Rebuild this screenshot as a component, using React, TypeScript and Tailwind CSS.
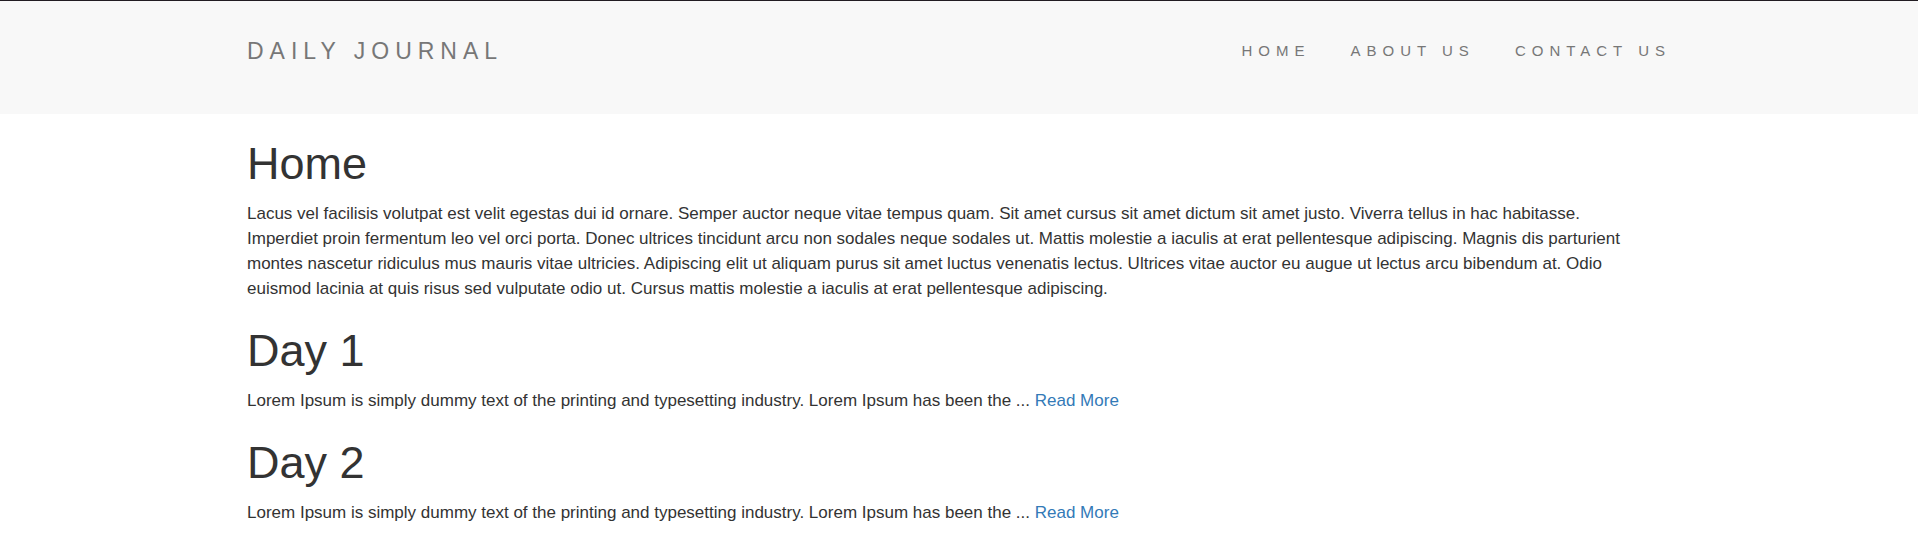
import React from 'react';

const navItems = ['Home', 'About Us', 'Contact Us'];

const posts = [
  { id: 1, title: 'Day 1' },
  { id: 2, title: 'Day 2' },
];

const preview =
  'Lorem Ipsum is simply dummy text of the printing and typesetting industry. Lorem Ipsum has been the ...';

const heading = 'mb-3 text-[45px] leading-[50px] font-normal';

export default function App() {
  return (
    <div className="bg-white font-['Liberation_Sans',Arial,sans-serif] text-[#333333]">
      <header className="border-t border-[#211c22] bg-[#f8f8f8] pt-[37px] pb-[50px]">
        <nav className="mx-auto flex w-full max-w-[1462px] items-center justify-between px-[19px]">
          <a href="#home" className="text-[23px] leading-[26px] tracking-[6px] text-[#777777] uppercase">
            Daily Journal
          </a>
          <ul className="flex gap-10">
            {navItems.map((item) => (
              <li key={item}>
                <a href="#home" className="text-[15px] tracking-[6px] text-[#777777] uppercase">
                  {item}
                </a>
              </li>
            ))}
          </ul>
        </nav>
      </header>
      <main className="mx-auto w-full max-w-[1462px] px-[19px] text-[17px] leading-[25px]">
        <section className="pt-[25px]">
          <h1 className={heading}>Home</h1>
          <p className="max-w-[1400px]">
            Lacus vel facilisis volutpat est velit egestas dui id ornare. Semper auctor neque vitae tempus quam. Sit
            amet cursus sit amet dictum sit amet justo. Viverra tellus in hac habitasse. Imperdiet proin fermentum leo
            vel orci porta. Donec ultrices tincidunt arcu non sodales neque sodales ut. Mattis molestie a iaculis at
            erat pellentesque adipiscing. Magnis dis parturient montes nascetur ridiculus mus mauris vitae ultricies.
            Adipiscing elit ut aliquam purus sit amet luctus venenatis lectus. Ultrices vitae auctor eu augue ut lectus
            arcu bibendum at. Odio euismod lacinia at quis risus sed vulputate odio ut. Cursus mattis molestie a iaculis
            at erat pellentesque adipiscing.
          </p>
        </section>
        {posts.map((post) => (
          <article key={post.id} className="pt-[25px]">
            <h1 className={heading}>{post.title}</h1>
            <p>
              {preview}{' '}
              <a href="#post" className="text-[#337ab7]">
                Read More
              </a>
            </p>
          </article>
        ))}
      </main>
    </div>
  );
}
